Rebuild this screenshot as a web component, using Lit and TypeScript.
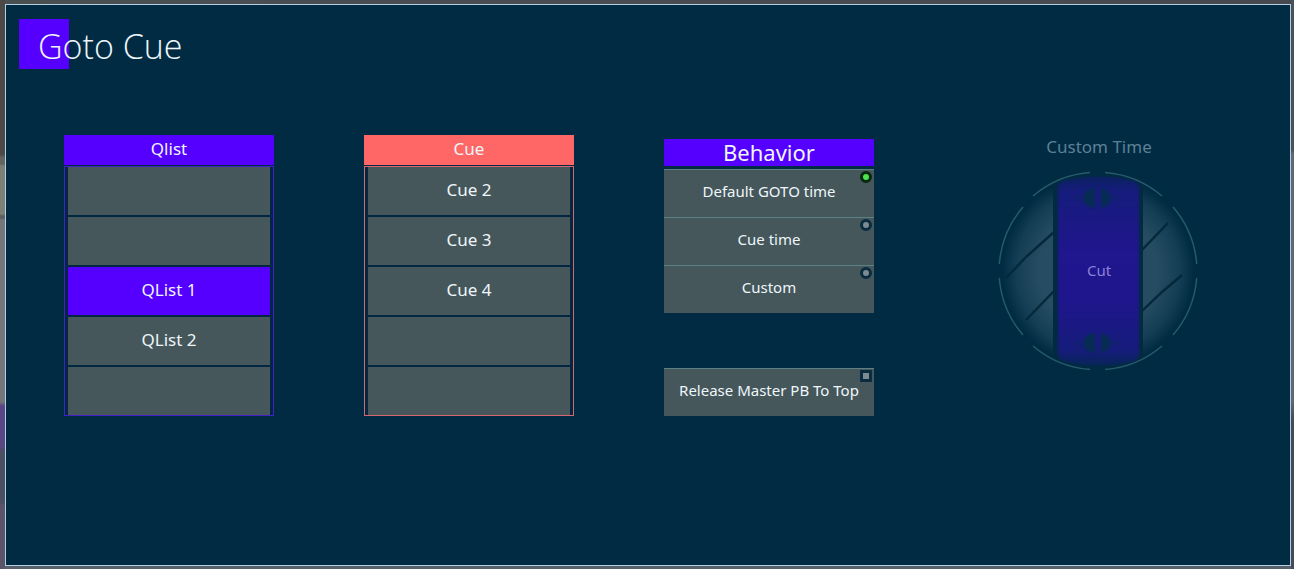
import { LitElement, html, svg, css, nothing } from "lit";
import { customElement, property, state } from "lit/decorators.js";
import { classMap } from "lit/directives/class-map.js";

const FONT = css`"Noto Sans", "Open Sans", sans-serif`;

@customElement("pick-list")
export class PickList extends LitElement {
  @property() heading = "";
  @property() tone: "violet" | "coral" = "violet";
  @property({ attribute: false }) items: string[] = [];
  @property({ type: Number }) selected = -1;

  static styles = css`
    :host {
      display: block;
      font-family: ${FONT};
      color: #eef6fa;
    }
    .heading {
      margin: 0 0 1px;
      height: 30px;
      font-size: 17px;
      font-weight: 400;
      line-height: 28px;
      text-align: center;
    }
    .violet .heading {
      background: #5500ff;
    }
    .coral .heading {
      background: #ff6666;
    }
    .rows {
      display: grid;
      gap: 2px;
      margin: 0;
      padding: 0 3px;
      list-style: none;
      background: #022742;
    }
    .violet .rows {
      border: 1px solid #4420c8;
    }
    .coral .rows {
      border: 1px solid #d8666e;
    }
    .row {
      display: block;
      box-sizing: border-box;
      width: 100%;
      height: 48px;
      padding: 0 0 2px;
      border: 0;
      background: #45575b;
      color: inherit;
      font: inherit;
      font-size: 17px;
      line-height: 24px;
    }
    .row.on {
      background: #5500ff;
    }
  `;

  render() {
    return html`<section class=${this.tone}>
      <h2 class="heading">${this.heading}</h2>
      <ul class="rows">
        ${this.items.map(
          (item, i) => html`<li>
            <button
              type="button"
              class=${classMap({ row: true, on: i === this.selected })}
              ?disabled=${!item}
              @click=${() => (this.selected = i)}
            >${item || nothing}</button>
          </li>`
        )}
      </ul>
    </section>`;
  }
}

@customElement("time-knob")
export class TimeKnob extends LitElement {
  @property() label = "";
  @property() value = "";

  static styles = css`
    :host {
      display: flex;
      flex-direction: column;
      align-items: center;
      font-family: ${FONT};
    }
    .label {
      font-size: 17px;
      line-height: 24px;
      color: #5d8096;
    }
    .dial {
      display: grid;
      place-items: center;
      margin-top: 11px;
      padding: 0;
      border: 0;
      background: none;
      font: inherit;
    }
    .face,
    .value {
      grid-area: 1 / 1;
    }
    .value {
      padding-bottom: 2px;
      font-size: 15px;
      line-height: 20px;
      color: #8a80d8;
    }
  `;

  private arrows(y: number) {
    return svg`<g transform="translate(100 ${y})" fill="#062c54">
      <path d="M-3 -10 C-11 -9 -15 -5 -15 0 C-15 5 -11 9 -3 10Z" />
      <path d="M3 -10 C9 -9 13 -4 13 0 C13 4 9 9 3 10Z" />
      <path d="M-18 -4 L-24 0 L-18 4Z M16 -4 L22 0 L16 4Z" opacity="0.45" />
    </g>`;
  }

  render() {
    return html`
      <span class="label" id="knob-label">${this.label}</span>
      <button type="button" class="dial" disabled aria-labelledby="knob-label">
        <svg class="face" width="202" height="202" viewBox="0 0 202 202" aria-hidden="true">
          <defs>
            <radialGradient id="glass" gradientUnits="userSpaceOnUse" cx="100" cy="101" r="96">
              <stop offset="0" stop-color="#2a4f66" />
              <stop offset="0.62" stop-color="#264c61" />
              <stop offset="0.85" stop-color="#143e54" />
              <stop offset="1" stop-color="#012b42" />
            </radialGradient>
            <linearGradient id="band" x1="0" y1="0" x2="0" y2="1">
              <stop offset="0" stop-color="#0b2161" />
              <stop offset="0.08" stop-color="#161c7c" />
              <stop offset="0.4" stop-color="#20168e" />
              <stop offset="0.65" stop-color="#1f168d" />
              <stop offset="0.92" stop-color="#161c7b" />
              <stop offset="1" stop-color="#082559" />
            </linearGradient>
            <filter id="soft" x="-10%" y="-10%" width="120%" height="120%" color-interpolation-filters="sRGB">
              <feGaussianBlur stdDeviation="1" />
            </filter>
          </defs>
          <circle cx="100" cy="101" r="96" fill="url(#glass)" />
          <g stroke="#04283c" stroke-width="2.4" fill="none">
            <path d="M8 108 L28 87 L56 62" />
            <path d="M28 150 L56 121" />
            <path d="M143 81 L170 53" />
            <path d="M143 142 L164 122 L184 105" />
          </g>
          <rect x="55" y="6" width="90" height="190" fill="#022b42" />
          <path
            d="M60 18 Q60 13 66 11 Q101 2 136 11 Q141 13 141 18 V184 Q141 189 136 191 Q101 200 66 191 Q60 189 60 184Z"
            fill="url(#band)"
            filter="url(#soft)"
          />
          <g filter="url(#soft)">${this.arrows(28)}${this.arrows(173)}</g>
          <g fill="none" stroke="#255a6a" stroke-width="1.5">
            <path d="M35 26 A99 99 0 0 1 92 2.5" />
            <path d="M107 2.5 A99 99 0 0 1 164 26" />
            <path d="M175 37 A99 99 0 0 1 198.7 94" />
            <path d="M198.7 108 A99 99 0 0 1 175 165" />
            <path d="M164 176 A99 99 0 0 1 107 199.5" />
            <path d="M92 199.5 A99 99 0 0 1 35 176" />
            <path d="M25 165 A99 99 0 0 1 1.3 108" />
            <path d="M1.3 94 A99 99 0 0 1 25 37" />
          </g>
        </svg>
        <span class="value">${this.value}</span>
      </button>
    `;
  }
}

@customElement("app-root")
export class AppRoot extends LitElement {
  @state() private behavior = 0;
  @state() private release = false;

  private behaviors = ["Default GOTO time", "Cue time", "Custom"];

  static styles = css`
    :host {
      display: flex;
      box-sizing: border-box;
      min-height: 100vh;
      padding: 4px 3px 3px 5px;
      background:
        linear-gradient(#4d4848 0 154px, #636660 158px 164px, #7c8076 166px 214px,
          #5c5f62 216px 218px, #74767a 220px 402px, #5a4585 406px 446px,
          #4b4f62 452px 502px, #5b5468 506px) left / 5px 100% no-repeat,
        linear-gradient(#46525c 0 150px, #5d6a76 154px 400px, #434c58 420px) right / 3px 100% no-repeat,
        linear-gradient(90deg, #4a4f52, #47494f) top / 100% 4px no-repeat,
        #58616b;
      font-family: ${FONT};
      color: #eef6fa;
    }
    .dialog {
      flex: 1;
      border: 1px solid #b4cfe3;
      background: #002b42;
    }
    .title {
      margin: 14px 13px 0;
      padding: 2px 0 0 19px;
      background: linear-gradient(#5500ff, #5500ff) left top / 50px 50px no-repeat;
      font-family: "Open Sans", "Noto Sans", sans-serif;
      font-size: 34px;
      font-weight: 300;
      line-height: 50px;
    }
    .columns {
      display: grid;
      grid-template-columns: 7fr 7fr 7fr 9fr;
      gap: 90px;
      align-items: start;
      padding: 64px 56px 24px 58px;
    }
    .behavior {
      margin: 0;
      padding: 4px 0 0;
      border: 0;
      min-width: 0;
    }
    .caption {
      box-sizing: border-box;
      width: 100%;
      height: 27px;
      margin-bottom: 3px;
      padding: 0;
      background: #5500ff;
      font-size: 22px;
      line-height: 26px;
      text-align: center;
    }
    .option {
      position: relative;
      display: flex;
      align-items: center;
      justify-content: center;
      box-sizing: border-box;
      height: 48px;
      padding-bottom: 5px;
      border-top: 1px solid #5d7f86;
      background: #45575b;
      font-size: 15px;
      line-height: 24px;
      white-space: nowrap;
    }
    .release {
      margin-top: 55px;
    }
    .mark {
      position: absolute;
      top: 1px;
      right: 2px;
      appearance: none;
      box-sizing: border-box;
      width: 12px;
      height: 12px;
      margin: 0;
      border: 3px solid #0a2c40;
      background: #7d8b91;
    }
    .mark[type="radio"] {
      border-radius: 50%;
    }
    .mark[type="radio"]:checked {
      border-color: #06280f;
      background: #4be34f;
    }
    .mark[type="checkbox"]:checked {
      background: #4be34f;
    }
  `;

  render() {
    return html`<main class="dialog">
      <h1 class="title">Goto Cue</h1>
      <div class="columns">
        <pick-list
          heading="Qlist"
          .items=${["", "", "QList 1", "QList 2", ""]}
          .selected=${2}
        ></pick-list>
        <pick-list
          heading="Cue"
          tone="coral"
          .items=${["Cue 2", "Cue 3", "Cue 4", "", ""]}
        ></pick-list>
        <fieldset class="behavior">
          <div class="caption" id="behavior-caption">Behavior</div>
          <div role="radiogroup" aria-labelledby="behavior-caption">
            ${this.behaviors.map(
              (name, i) => html`<label class="option">
                ${name}
                <input
                  class="mark"
                  type="radio"
                  name="behavior"
                  .checked=${i === this.behavior}
                  @change=${() => (this.behavior = i)}
                />
              </label>`
            )}
          </div>
          <label class="option release">
            Release Master PB To Top
            <input
              class="mark"
              type="checkbox"
              .checked=${this.release}
              @change=${() => (this.release = !this.release)}
            />
          </label>
        </fieldset>
        <time-knob label="Custom Time" value="Cut"></time-knob>
      </div>
    </main>`;
  }
}
